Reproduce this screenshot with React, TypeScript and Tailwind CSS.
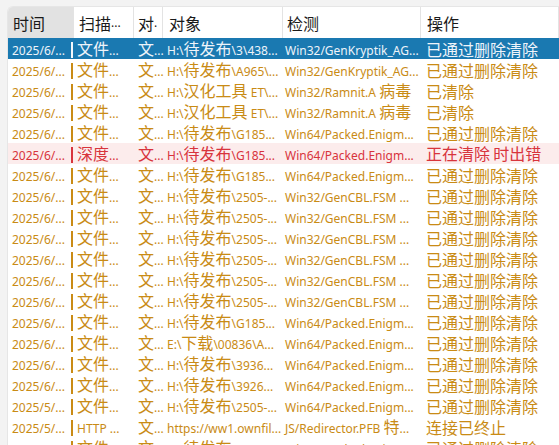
import React from "react";

type Tone = "selected" | "warn" | "error";

interface LogRow {
  time: string;
  scan: string;
  kind: string;
  target: string;
  detect: string;
  action: string;
  tone: Tone;
}

const DONE = "已通过删除清除";

const ROWS: LogRow[] = [
  { time: "2025/6/...", scan: "文件...", kind: "文...", target: "H:\\待发布\\3\\438...", detect: "Win32/GenKryptik_AG...", action: DONE, tone: "selected" },
  { time: "2025/6/...", scan: "文件...", kind: "文...", target: "H:\\待发布\\A965\\...", detect: "Win32/GenKryptik_AG...", action: DONE, tone: "warn" },
  { time: "2025/6/...", scan: "文件...", kind: "文...", target: "H:\\汉化工具 ET\\...", detect: "Win32/Ramnit.A 病毒", action: "已清除", tone: "warn" },
  { time: "2025/6/...", scan: "文件...", kind: "文...", target: "H:\\汉化工具 ET\\...", detect: "Win32/Ramnit.A 病毒", action: "已清除", tone: "warn" },
  { time: "2025/6/...", scan: "文件...", kind: "文...", target: "H:\\待发布\\G185...", detect: "Win64/Packed.Enigm...", action: DONE, tone: "warn" },
  { time: "2025/6/...", scan: "深度...", kind: "文...", target: "H:\\待发布\\G185...", detect: "Win64/Packed.Enigm...", action: "正在清除 时出错", tone: "error" },
  { time: "2025/6/...", scan: "文件...", kind: "文...", target: "H:\\待发布\\G185...", detect: "Win64/Packed.Enigm...", action: DONE, tone: "warn" },
  { time: "2025/6/...", scan: "文件...", kind: "文...", target: "H:\\待发布\\2505-...", detect: "Win32/GenCBL.FSM ...", action: DONE, tone: "warn" },
  { time: "2025/6/...", scan: "文件...", kind: "文...", target: "H:\\待发布\\2505-...", detect: "Win32/GenCBL.FSM ...", action: DONE, tone: "warn" },
  { time: "2025/6/...", scan: "文件...", kind: "文...", target: "H:\\待发布\\2505-...", detect: "Win32/GenCBL.FSM ...", action: DONE, tone: "warn" },
  { time: "2025/6/...", scan: "文件...", kind: "文...", target: "H:\\待发布\\2505-...", detect: "Win32/GenCBL.FSM ...", action: DONE, tone: "warn" },
  { time: "2025/6/...", scan: "文件...", kind: "文...", target: "H:\\待发布\\2505-...", detect: "Win32/GenCBL.FSM ...", action: DONE, tone: "warn" },
  { time: "2025/6/...", scan: "文件...", kind: "文...", target: "H:\\待发布\\2505-...", detect: "Win32/GenCBL.FSM ...", action: DONE, tone: "warn" },
  { time: "2025/6/...", scan: "文件...", kind: "文...", target: "H:\\待发布\\G185...", detect: "Win64/Packed.Enigm...", action: DONE, tone: "warn" },
  { time: "2025/6/...", scan: "文件...", kind: "文...", target: "E:\\下载\\00836\\A...", detect: "Win64/Packed.Enigm...", action: DONE, tone: "warn" },
  { time: "2025/6/...", scan: "文件...", kind: "文...", target: "H:\\待发布\\3936...", detect: "Win64/Packed.Enigm...", action: DONE, tone: "warn" },
  { time: "2025/6/...", scan: "文件...", kind: "文...", target: "H:\\待发布\\3926...", detect: "Win64/Packed.Enigm...", action: DONE, tone: "warn" },
  { time: "2025/5/...", scan: "文件...", kind: "文...", target: "H:\\待发布\\2505-...", detect: "Win64/Packed.Enigm...", action: DONE, tone: "warn" },
  { time: "2025/5/...", scan: "HTTP ...", kind: "文...", target: "https://ww1.ownfil...", detect: "JS/Redirector.PFB 特...", action: "连接已终止", tone: "warn" },
  { time: "2025/5/...", scan: "文件...", kind: "文...", target: "H:\\待发布\\2505-...", detect: "Win64/Packed.Enigm...", action: DONE, tone: "warn" },
];

// Latin runs render small, CJK runs render at the larger fallback size like the original
function Mixed({ text }: { text: string }) {
  const parts = text.split(/([\u3000-\u9fff\uff00-\uffef]+)/).filter(Boolean);
  return (
    <>
      {parts.map((part, i) =>
        /[\u3000-\u9fff\uff00-\uffef]/.test(part) ? (
          <span key={i} className="text-[16px] font-['Noto_Sans_CJK_SC',sans-serif]">
            {part}
          </span>
        ) : (
          <span key={i} className="text-[12px]">
            {part}
          </span>
        ),
      )}
    </>
  );
}

const TONE_ROW: Record<Tone, string> = {
  selected: "bg-[#1a79b1] text-[#eef4fa]",
  warn: "text-[#c98b15]",
  error: "bg-[#fcecec] text-[#d8343c]",
};

const TONE_BAR: Record<Tone, string> = {
  selected: "bg-[#f4f8fb]",
  warn: "bg-[#c98b15]",
  error: "bg-[#d8343c]",
};

function HeaderCell({ label, className }: { label: string; className?: string }) {
  return (
    <div className={`flex items-center border-r border-[#e3e3e3] text-[#1a1a1a] ${className ?? ""}`}>
      <Mixed text={label} />
    </div>
  );
}

export default function App() {
  return (
    <div className="h-[445px] w-[559px] overflow-hidden bg-[#f3f3f3] pl-[7px] pt-[6px] font-['Noto_Sans','Noto_Sans_CJK_SC',sans-serif]">
      <div className="h-full overflow-hidden rounded-tl-[6px] border-l border-t border-[#e6e6e6] bg-white">
        <div className="grid h-[31px] grid-cols-[66px_60px_29px_120px_138px_1fr] whitespace-nowrap">
          <HeaderCell label="时间" className="bg-[#e2e2e2] pl-[5px]" />
          <HeaderCell label="扫描..." className="pl-[5px]" />
          <HeaderCell label="对." className="pl-[4px]" />
          <HeaderCell label="对象" className="pl-[6px]" />
          <HeaderCell label="检测" className="pl-[4px]" />
          <HeaderCell label="操作" className="pl-[6px]" />
        </div>

        <div>
          {ROWS.map((row, i) => (
            <div
              key={i}
              className={`grid h-[21px] grid-cols-[63px_63px_29px_120px_138px_1fr] items-center overflow-hidden whitespace-nowrap leading-[21px] ${TONE_ROW[row.tone]}`}
            >
              <div className="pl-[4px]">
                <Mixed text={row.time} />
              </div>
              <div className="flex items-center gap-[4px]">
                <span className={`h-[16px] w-[2px] shrink-0 ${TONE_BAR[row.tone]}`} />
                <span>
                  <Mixed text={row.scan} />
                </span>
              </div>
              <div className="pl-[4px]">
                <Mixed text={row.kind} />
              </div>
              <div className="overflow-hidden pl-[4px]">
                <Mixed text={row.target} />
              </div>
              <div className="overflow-hidden pl-[2px]">
                <Mixed text={row.detect} />
              </div>
              <div className="pl-[5px]">
                <Mixed text={row.action} />
              </div>
            </div>
          ))}
        </div>
      </div>
    </div>
  );
}
